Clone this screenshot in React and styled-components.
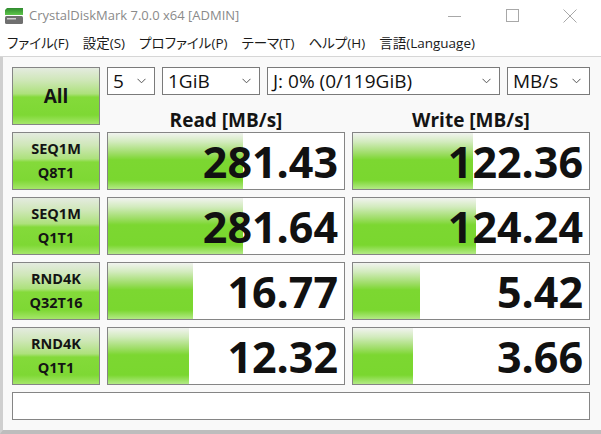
import React from 'react';
import styled, { createGlobalStyle } from 'styled-components';

const GlobalStyle = createGlobalStyle`
  html, body {
    margin: 0;
    padding: 0;
    background: #ffffff;
  }
  body {
    font-family: "Open Sans", "Noto Sans CJK JP", sans-serif;
  }
`;

const rows = [
  { l1: 'SEQ1M', l2: 'Q8T1', read: '281.43', rp: 0.57, write: '122.36', wp: 0.51 },
  { l1: 'SEQ1M', l2: 'Q1T1', read: '281.64', rp: 0.57, write: '124.24', wp: 0.52 },
  { l1: 'RND4K', l2: 'Q32T16', read: '16.77', rp: 0.36, write: '5.42', wp: 0.286 },
  { l1: 'RND4K', l2: 'Q1T1', read: '12.32', rp: 0.345, write: '3.66', wp: 0.256 },
];

const menus = ['ファイル(F)', '設定(S)', 'プロファイル(P)', 'テーマ(T)', 'ヘルプ(H)', '言語(Language)'];

const Window = styled.div`
  width: 601px;
  height: 434px;
  display: flex;
  flex-direction: column;
  overflow: hidden;
  background: #fff;
`;

const TitleBar = styled.div`
  flex-shrink: 0;
  height: 31px;
  display: flex;
  align-items: center;
  padding-left: 4px;
`;

const Title = styled.span`
  margin-left: 5px;
  font-size: 13px;
  color: #8a8a8a;
  flex: 1;
  padding-bottom: 1px;
`;

const Controls = styled.div`
  display: flex;
  align-items: center;
  height: 100%;
  padding-right: 2px;
`;

const CtrlBtn = styled.div`
  width: 58px;
  height: 100%;
  display: flex;
  align-items: center;
  justify-content: center;
  color: #a8a8a8;
`;

const MenuBar = styled.div`
  flex-shrink: 0;
  height: 25px;
  display: flex;
  align-items: center;
  border-bottom: 1px solid #d6d6d6;
`;

const MenuItem = styled.span`
  padding: 0 7px;
  font-size: 13.5px;
  color: #1a1a1a;
  font-feature-settings: "palt";
  line-height: 25px;
`;

const Content = styled.div`
  flex: 1;
  background: #f9f9f9;
  border-left: 3px solid #cfcfcf;
  border-bottom: 4px solid #bdbdbd;
  padding: 10px 11px 0 9px;
  display: grid;
  grid-template-columns: 88px 238px 238px;
  grid-template-rows: repeat(5, 58px) 28px;
  gap: 7px;
  align-content: start;
`;

const GreenButton = styled.div`
  border: 1px solid #858585;
  background: linear-gradient(
    to bottom,
    #e4ebdf 0%,
    #cfe7b8 22%,
    #ade17c 46%,
    #84da3a 52%,
    #7ed834 84%,
    #a5e66a 100%
  );
  display: flex;
  flex-direction: column;
  align-items: center;
  justify-content: center;
  font-weight: 700;
  color: #141414;
  font-size: ${(p) => (p.$big ? '19px' : '14.5px')};
  line-height: 24px;
`;

const TopPanel = styled.div`
  grid-column: 2 / 4;
  display: flex;
  flex-direction: column;
`;

const SelectRow = styled.div`
  display: flex;
  gap: 7px;
  height: 30px;
`;

const Select = styled.div`
  width: ${(p) => p.$w}px;
  box-sizing: border-box;
  border: 1px solid #7a7a7a;
  background: #fff;
  display: flex;
  align-items: center;
  justify-content: space-between;
  padding: 0 8px 0 5px;
  font-size: 19px;
  color: #111;
`;

const Headers = styled.div`
  flex: 1;
  display: grid;
  grid-template-columns: 238px 238px;
  gap: 7px;
  align-items: center;
`;

const HeaderText = styled.div`
  text-align: center;
  font-weight: 700;
  font-size: 19px;
  color: #141414;
  padding-top: 12px;
`;

const ResultCell = styled.div`
  position: relative;
  border: 1px solid #858585;
  background: #fff;
  display: flex;
  align-items: center;
  justify-content: flex-end;
  overflow: hidden;
`;

const Bar = styled.div`
  position: absolute;
  left: 0;
  top: 0;
  bottom: 0;
  background: linear-gradient(
    to bottom,
    #f1f3ef 0%,
    #d2ebbd 16%,
    #9fdd68 36%,
    #7cd731 48%,
    #7ad72f 84%,
    #b3ea86 100%
  );
`;

const Value = styled.span`
  position: relative;
  font-weight: 700;
  font-size: 43px;
  color: #111;
  padding-right: 6px;
  line-height: 1;
`;

const StatusBar = styled.div`
  grid-column: 1 / 4;
  border: 1px solid #858585;
  background: #fff;
`;

const Chevron = () => (
  <svg width="9" height="6" viewBox="0 0 9 6">
    <path d="M0.5 0.8 L4.5 4.8 L8.5 0.8" fill="none" stroke="#555" strokeWidth="1" />
  </svg>
);

const AppIcon = () => (
  <svg width="20" height="18" viewBox="0 0 20 18">
    <defs>
      <linearGradient id="gr" x1="0" y1="0" x2="0" y2="1">
        <stop offset="0" stopColor="#2f8a2f" />
        <stop offset="1" stopColor="#5ec64a" />
      </linearGradient>
    </defs>
    <path d="M3 1 H19 V8 H1 V3 Z" fill="url(#gr)" />
    <rect x="1" y="9" width="18" height="8" rx="1.5" fill="#6f6f6f" />
    <rect x="3" y="11" width="9" height="1.5" fill="#cfcfcf" />
  </svg>
);

const SelectBox = ({ w, children }) => (
  <Select $w={w}>
    <span>{children}</span>
    <Chevron />
  </Select>
);

const Result = ({ value, pct }) => (
  <ResultCell>
    <Bar style={{ width: `${pct * 100}%` }} />
    <Value>{value}</Value>
  </ResultCell>
);

export default function App() {
  return (
    <Window>
      <GlobalStyle />
      <TitleBar>
        <AppIcon />
        <Title>CrystalDiskMark 7.0.0 x64 [ADMIN]</Title>
        <Controls>
          <CtrlBtn>
            <svg width="13" height="13" viewBox="0 0 13 13">
              <path d="M0 7.5 H13" stroke="currentColor" strokeWidth="1" />
            </svg>
          </CtrlBtn>
          <CtrlBtn>
            <svg width="13" height="13" viewBox="0 0 13 13">
              <rect x="0.5" y="0.5" width="12" height="12" fill="none" stroke="currentColor" strokeWidth="1" />
            </svg>
          </CtrlBtn>
          <CtrlBtn>
            <svg width="14" height="14" viewBox="0 0 14 14">
              <path d="M0.5 0.5 L13.5 13.5 M13.5 0.5 L0.5 13.5" stroke="currentColor" strokeWidth="1" />
            </svg>
          </CtrlBtn>
        </Controls>
      </TitleBar>
      <MenuBar>
        {menus.map((m) => (
          <MenuItem key={m}>{m}</MenuItem>
        ))}
      </MenuBar>
      <Content>
        <GreenButton $big>All</GreenButton>
        <TopPanel>
          <SelectRow>
            <SelectBox w={48}>5</SelectBox>
            <SelectBox w={98}>1GiB</SelectBox>
            <SelectBox w={233}>J: 0% (0/119GiB)</SelectBox>
            <SelectBox w={83}>MB/s</SelectBox>
          </SelectRow>
          <Headers>
            <HeaderText>Read [MB/s]</HeaderText>
            <HeaderText>Write [MB/s]</HeaderText>
          </Headers>
        </TopPanel>
        {rows.map((r, i) => (
          <React.Fragment key={i}>
            <GreenButton>
              <span>{r.l1}</span>
              <span>{r.l2}</span>
            </GreenButton>
            <Result value={r.read} pct={r.rp} />
            <Result value={r.write} pct={r.wp} />
          </React.Fragment>
        ))}
        <StatusBar />
      </Content>
    </Window>
  );
}
